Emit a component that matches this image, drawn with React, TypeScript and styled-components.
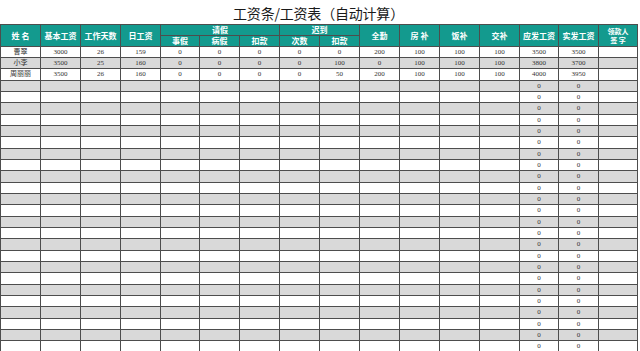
import { FC } from "react";
import styled, { createGlobalStyle } from "styled-components";

const GlobalStyle = createGlobalStyle`
  html, body {
    margin: 0;
    padding: 0;
    background: #ffffff;
    overflow: hidden;
  }
`;

type Row = (string | number)[];

// 姓名, 基本工资, 工作天数, 日工资, 事假, 病假, 扣款, 次数, 扣款, 全勤, 房补, 饭补, 交补, 应发工资, 实发工资, 签字
const filled: Row[] = [
  ["曹翠", 3000, 26, 159, 0, 0, 0, 0, 0, 200, 100, 100, 100, 3500, 3500, ""],
  ["小李", 3500, 25, 160, 0, 0, 0, 0, 100, 0, 100, 100, 100, 3800, 3700, ""],
  ["周丽丽", 3500, 26, 160, 0, 0, 0, 0, 50, 200, 100, 100, 100, 4000, 3950, ""],
];

const TOTAL_ROWS = 27;

const rows: Row[] = Array.from({ length: TOTAL_ROWS }, (_, i) => {
  if (i < filled.length) return filled[i];
  const r: Row = Array(16).fill("");
  r[13] = 0;
  r[14] = 0;
  return r;
});

const App: FC = () => {
  return (
    <>
      <GlobalStyle />
      <Page>
        <Title>工资条/工资表（自动计算）</Title>
        <Sheet>
          <HeadCell $col={1} $row={1} $rowSpan={2}>姓 名</HeadCell>
          <HeadCell $col={2} $row={1} $rowSpan={2}>基本工资</HeadCell>
          <HeadCell $col={3} $row={1} $rowSpan={2}>工作天数</HeadCell>
          <HeadCell $col={4} $row={1} $rowSpan={2}>日工资</HeadCell>
          <HeadCell $col={5} $row={1} $colSpan={3}>请假</HeadCell>
          <HeadCell $col={8} $row={1} $colSpan={2}>迟到</HeadCell>
          <HeadCell $col={5} $row={2}>事假</HeadCell>
          <HeadCell $col={6} $row={2}>病假</HeadCell>
          <HeadCell $col={7} $row={2}>扣款</HeadCell>
          <HeadCell $col={8} $row={2}>次数</HeadCell>
          <HeadCell $col={9} $row={2}>扣款</HeadCell>
          <HeadCell $col={10} $row={1} $rowSpan={2}>全勤</HeadCell>
          <HeadCell $col={11} $row={1} $rowSpan={2}>房 补</HeadCell>
          <HeadCell $col={12} $row={1} $rowSpan={2}>饭补</HeadCell>
          <HeadCell $col={13} $row={1} $rowSpan={2}>交补</HeadCell>
          <HeadCell $col={14} $row={1} $rowSpan={2}>应发工资</HeadCell>
          <HeadCell $col={15} $row={1} $rowSpan={2}>实发工资</HeadCell>
          <HeadCell $col={16} $row={1} $rowSpan={2}>
            <SignLabel>
              <span>领款人</span>
              <span>签 字</span>
            </SignLabel>
          </HeadCell>
          {rows.map((r, i) =>
            r.map((v, j) => (
              <Cell key={`${i}-${j}`} $striped={i % 2 === 1}>
                {v}
              </Cell>
            ))
          )}
        </Sheet>
      </Page>
    </>
  );
};

const Page = styled.div`
  width: 640px;
  height: 351px;
  overflow: hidden;
  display: flex;
  flex-direction: column;
`;

const Title = styled.div`
  height: 24px;
  width: 637px;
  flex-shrink: 0;
  display: flex;
  align-items: center;
  justify-content: center;
  padding-top: 1px;
  box-sizing: border-box;
  font-family: "Noto Sans CJK SC", "Noto Sans", sans-serif;
  font-size: 14px;
  color: #1a1a1a;
  letter-spacing: -0.2px;
`;

const Sheet = styled.div`
  width: max-content;
  display: grid;
  grid-template-columns: 39px 39px 39px 39px 38px 39px 39px 39px 39px 39px 39px 39px 39px 38px 39px 38px;
  grid-template-rows: 10px 10px;
  grid-auto-rows: 10px 10px 11px;
  gap: 1px;
  background: #4d4d4d;
  border: 1px solid #4d4d4d;
  border-bottom: none;
  flex-shrink: 0;
`;

const HeadCell = styled.div<{
  $col: number;
  $row: number;
  $colSpan?: number;
  $rowSpan?: number;
}>`
  grid-column: ${(p) => p.$col} / span ${(p) => p.$colSpan ?? 1};
  grid-row: ${(p) => p.$row} / span ${(p) => p.$rowSpan ?? 1};
  background: #139a8e;
  color: #ffffff;
  display: flex;
  align-items: center;
  justify-content: center;
  font-family: "Noto Sans CJK SC", "Noto Sans", sans-serif;
  font-weight: 700;
  font-size: 8px;
  line-height: 1;
  white-space: nowrap;
  overflow: hidden;
`;

const SignLabel = styled.div`
  display: flex;
  flex-direction: column;
  align-items: center;
  font-size: 7px;
  line-height: 8px;
  gap: 1px;
`;

const Cell = styled.div<{ $striped: boolean }>`
  background: ${(p) => (p.$striped ? "#d9d9d9" : "#ffffff")};
  color: #333333;
  display: flex;
  align-items: center;
  justify-content: center;
  font-family: "Liberation Serif", "Noto Sans CJK SC", serif;
  font-size: 7px;
  line-height: 1;
  overflow: hidden;
  white-space: nowrap;
`;

export default App;
